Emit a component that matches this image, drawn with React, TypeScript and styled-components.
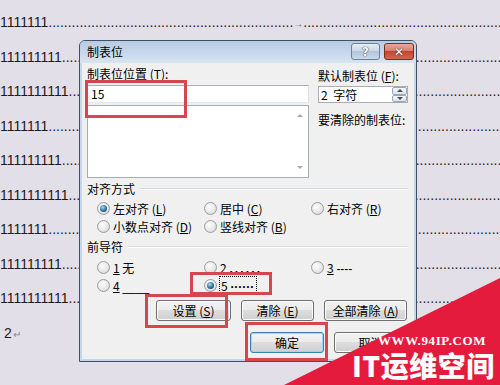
import React from "react";
import styled, { createGlobalStyle } from "styled-components";

const GlobalStyle = createGlobalStyle`
  html, body {
    margin: 0;
    padding: 0;
  }
  body {
    background: #e3dfe9;
    overflow: hidden;
  }
`;

const UI_FONT = `"Noto Sans CJK SC", "Liberation Sans", sans-serif`;

const Page = styled.div`
  position: relative;
  width: 500px;
  height: 385px;
  overflow: hidden;
  background: #e3dfe9;
`;

const Doc = styled.div`
  padding-top: 5px;
  font-family: "Liberation Sans", Arial, sans-serif;
  font-size: 14px;
  color: #1b1b1b;
`;

const DocLine = styled.div<{ $indent?: number }>`
  height: 34.5px;
  line-height: 34.5px;
  white-space: nowrap;
  overflow: hidden;
  padding-left: ${({ $indent }) => $indent ?? 0}px;
`;

const TabArrow = styled.span`
  font-size: 10px;
  color: #555;
`;

const Pilcrow = styled.span`
  font-size: 10px;
  color: #888;
  margin-left: 1px;
`;

/* ---------- dialog window ---------- */

const Window = styled.div`
  position: absolute;
  left: 79px;
  top: 40px;
  width: 338px;
  height: 322px;
  box-sizing: border-box;
  border: 1px solid #3f5066;
  border-radius: 6px 6px 0 0;
  background: #c6d7eb;
  display: flex;
  flex-direction: column;
  font-family: ${UI_FONT};
  font-size: 12px;
  color: #000;
`;

const TitleBar = styled.div`
  height: 22px;
  box-sizing: border-box;
  display: flex;
  align-items: flex-start;
  justify-content: space-between;
  padding: 2px 2px 0 7px;
  border-radius: 5px 5px 0 0;
  background: linear-gradient(#b7cbe3, #d7e4f2);
`;

const Title = styled.span`
  line-height: 16px;
  margin-top: 1px;
`;

const CaptionButtons = styled.div`
  display: flex;
  gap: 4px;
`;

const CaptionButton = styled.div<{ $close?: boolean }>`
  width: ${({ $close }) => ($close ? 30 : 29)}px;
  height: 17px;
  box-sizing: border-box;
  border-radius: 3px;
  display: flex;
  align-items: center;
  justify-content: center;
  font-family: "DejaVu Sans", sans-serif;
  font-weight: bold;
  font-size: 12px;
  color: #fff;
  text-shadow: 0 0 1px #333, 0 0 1px #333;
  border: 1px solid ${({ $close }) => ($close ? "#7a2c20" : "#6f8199")};
  background: ${({ $close }) =>
    $close
      ? "linear-gradient(#e9a89a, #d8806c 45%, #c4452e 50%, #d2674f)"
      : "linear-gradient(#e6edf5, #cbd8e7 45%, #b3c6dc 50%, #c9d9ea)"};
`;

const Client = styled.div`
  flex: 1;
  margin: 0 2px 2px;
  background: #f0f0f0;
  padding: 3px 6px 0 5px;
  display: flex;
  flex-direction: column;
`;

const TopSection = styled.div`
  display: flex;
  gap: 9px;
`;

const Column = styled.div<{ $width: number }>`
  width: ${({ $width }) => $width}px;
  display: flex;
  flex-direction: column;
`;

const FieldLabel = styled.div<{ $gap?: number }>`
  line-height: 16px;
  white-space: nowrap;
  margin-top: ${({ $gap }) => $gap ?? 0}px;
`;

const TextInput = styled.div`
  margin-top: 3px;
  height: 18px;
  box-sizing: border-box;
  border: 1px solid #abadb3;
  border-color: #abadb3 #dbdfe6 #e3e9ef #e2e3ea;
  background: #fff;
  padding-left: 3px;
  line-height: 16px;
`;

const ListBox = styled.div`
  margin-top: 2px;
  height: 73px;
  box-sizing: border-box;
  border: 1px solid #a8acb3;
  background: #fff;
  display: flex;
  justify-content: flex-end;
`;

const ScrollTrack = styled.div`
  width: 17px;
  display: flex;
  flex-direction: column;
  justify-content: space-between;
  align-items: center;
  padding: 8px 0 8px;
`;

const Arrow = styled.span<{ $down?: boolean }>`
  width: 0;
  height: 0;
  border-left: 3px solid transparent;
  border-right: 3px solid transparent;
  ${({ $down }) => ($down ? "border-top: 3px solid #a9a9a9;" : "border-bottom: 3px solid #a9a9a9;")}
`;

const SpinBox = styled.div`
  margin-top: 2px;
  height: 17px;
  box-sizing: border-box;
  border: 1px solid #abadb3;
  background: #fff;
  display: flex;
`;

const SpinText = styled.span`
  flex: 1;
  padding-left: 2px;
  line-height: 15px;
  word-spacing: 3px;
`;

const SpinButtons = styled.div`
  width: 15px;
  display: flex;
  flex-direction: column;
`;

const SpinHalf = styled.div`
  flex: 1;
  box-sizing: border-box;
  border: 1px solid #9ba7b8;
  border-radius: 2px;
  background: linear-gradient(#f4f7fb, #dde5ef);
  display: flex;
  align-items: center;
  justify-content: center;
`;

const SpinArrow = styled.span<{ $down?: boolean }>`
  width: 0;
  height: 0;
  border-left: 3px solid transparent;
  border-right: 3px solid transparent;
  ${({ $down }) => ($down ? "border-top: 3px solid #4a4a4a;" : "border-bottom: 3px solid #4a4a4a;")}
`;

const GroupHeader = styled.div<{ $gap: number }>`
  margin-top: ${({ $gap }) => $gap}px;
  display: flex;
  align-items: center;
  gap: 5px;
  line-height: 16px;
`;

const Rule = styled.div`
  flex: 1;
  height: 0;
  border-top: 1px solid #d5dadf;
  border-bottom: 1px solid #fff;
`;

const RadioGrid = styled.div<{ $gap: number }>`
  margin-top: ${({ $gap }) => $gap}px;
  padding-left: 10px;
  display: grid;
  grid-template-columns: repeat(3, 107px);
  grid-auto-rows: 18px;
`;

const RadioItem = styled.div`
  display: flex;
  align-items: center;
  gap: 3px;
  white-space: nowrap;
`;

const RadioCircle = styled.span`
  width: 13px;
  height: 13px;
  box-sizing: border-box;
  border-radius: 50%;
  border: 1px solid #9c9c9c;
  background: radial-gradient(circle at 40% 35%, #fdfdfd 0%, #e8e8e8 55%, #cdcdcd 100%);
  display: flex;
  align-items: center;
  justify-content: center;
`;

const RadioDot = styled.span`
  width: 7px;
  height: 7px;
  border-radius: 50%;
  background: radial-gradient(circle at 40% 35%, #a8dcf3 0%, #2f7098 55%, #173f5a 100%);
`;

const Acc = styled.span`
  text-decoration: underline;
`;

const Leader = styled.span<{ $spacing?: number; $bold?: boolean }>`
  font-family: "Liberation Sans", Arial, sans-serif;
  font-size: 12px;
  font-weight: ${({ $bold }) => ($bold ? "bold" : "normal")};
  color: #000;
  letter-spacing: ${({ $spacing }) => $spacing ?? 0}px;
`;

const FocusRect = styled.span`
  outline: 1px dotted #000;
  padding: 0 2px 0 1px;
`;

const ButtonRow = styled.div<{ $gap: number }>`
  margin-top: ${({ $gap }) => $gap}px;
  display: flex;
  justify-content: flex-end;
  gap: 10px;
  padding-right: 1px;
`;

const Button = styled.div<{ $width: number; $default?: boolean }>`
  width: ${({ $width }) => $width}px;
  height: 21px;
  box-sizing: border-box;
  border-radius: 3px;
  border: 1px solid ${({ $default }) => ($default ? "#3c7fb1" : "#707070")};
  box-shadow: inset 0 0 0 1px ${({ $default }) => ($default ? "#9fd5f2" : "#fbfbfb")};
  background: linear-gradient(#f2f2f2 0%, #ebebeb 50%, #dddddd 50%, #cfcfcf 100%);
  display: flex;
  align-items: center;
  justify-content: center;
  line-height: 16px;
  white-space: nowrap;
`;

/* ---------- annotations / watermark ---------- */

const Highlight = styled.div<{ $x: number; $y: number; $w: number; $h: number }>`
  position: absolute;
  left: ${({ $x }) => $x}px;
  top: ${({ $y }) => $y}px;
  width: ${({ $w }) => $w}px;
  height: ${({ $h }) => $h}px;
  box-sizing: border-box;
  border: 3px solid #d6464f;
`;

const WatermarkBand = styled.div`
  position: absolute;
  left: 280px;
  top: 275px;
  width: 220px;
  height: 110px;
  background: #e51b3d;
  clip-path: polygon(4px 110px, 220px 3px, 220px 110px);
`;

const WatermarkUrl = styled.div`
  position: absolute;
  left: 378px;
  top: 333px;
  font-family: "Liberation Serif", "Times New Roman", serif;
  font-weight: bold;
  font-size: 13px;
  line-height: 16px;
  color: #fff;
  letter-spacing: 0.6px;
`;

const WatermarkName = styled.div`
  position: absolute;
  left: 352px;
  top: 348px;
  font-family: "Noto Sans CJK SC", sans-serif;
  font-weight: 900;
  font-size: 28px;
  line-height: 34px;
  color: #fff;
  letter-spacing: 0.5px;
  white-space: nowrap;
`;

const dots = (n: number) => ".".repeat(n);

const docRows = [
  "111111111.",
  "1111111111",
  "1111111....",
  "111111111.",
  "1111111111",
  "1111111....",
  "111111111.",
  "1111111111",
];

const Radio: React.FC<{ checked?: boolean; children: React.ReactNode }> = ({ checked, children }) => (
  <RadioItem>
    <RadioCircle>{checked && <RadioDot />}</RadioCircle>
    <span>{children}</span>
  </RadioItem>
);

const TabDialog: React.FC = () => (
  <Window>
    <TitleBar>
      <Title>制表位</Title>
      <CaptionButtons>
        <CaptionButton>?</CaptionButton>
        <CaptionButton $close>✕</CaptionButton>
      </CaptionButtons>
    </TitleBar>
    <Client>
      <TopSection>
        <Column $width={222}>
          <FieldLabel>
            制表位位置 (<Acc>T</Acc>):
          </FieldLabel>
          <TextInput>15</TextInput>
          <ListBox>
            <ScrollTrack>
              <Arrow />
              <Arrow $down />
            </ScrollTrack>
          </ListBox>
        </Column>
        <Column $width={90}>
          <FieldLabel $gap={2}>
            默认制表位 (<Acc>F</Acc>):
          </FieldLabel>
          <SpinBox>
            <SpinText>2 字符</SpinText>
            <SpinButtons>
              <SpinHalf>
                <SpinArrow />
              </SpinHalf>
              <SpinHalf>
                <SpinArrow $down />
              </SpinHalf>
            </SpinButtons>
          </SpinBox>
          <FieldLabel $gap={9}>要清除的制表位:</FieldLabel>
        </Column>
      </TopSection>

      <GroupHeader $gap={3}>
        <span>对齐方式</span>
        <Rule />
      </GroupHeader>
      <RadioGrid $gap={2}>
        <Radio checked>
          左对齐 (<Acc>L</Acc>)
        </Radio>
        <Radio>
          居中 (<Acc>C</Acc>)
        </Radio>
        <Radio>
          右对齐 (<Acc>R</Acc>)
        </Radio>
        <Radio>
          小数点对齐 (<Acc>D</Acc>)
        </Radio>
        <Radio>
          竖线对齐 (<Acc>B</Acc>)
        </Radio>
      </RadioGrid>

      <GroupHeader $gap={4}>
        <span>前导符</span>
        <Rule />
      </GroupHeader>
      <RadioGrid $gap={3}>
        <Radio>
          <Acc>1</Acc> 无
        </Radio>
        <Radio>
          <Acc>2</Acc> <Leader $spacing={-0.6} $bold>. . . . . .</Leader>
        </Radio>
        <Radio>
          <Acc>3</Acc> <Leader>----</Leader>
        </Radio>
        <Radio>
          <Acc>4</Acc> <Leader>____</Leader>
        </Radio>
        <Radio checked>
          <FocusRect>
            <Acc>5</Acc> <Leader $bold>······</Leader>
          </FocusRect>
        </Radio>
      </RadioGrid>

      <ButtonRow $gap={6}>
        <Button $width={75}>
          设置 (<Acc>S</Acc>)
        </Button>
        <Button $width={73}>
          清除 (<Acc>E</Acc>)
        </Button>
        <Button $width={83}>
          全部清除 (<Acc>A</Acc>)
        </Button>
      </ButtonRow>
      <ButtonRow $gap={11}>
        <Button $width={74} $default>
          确定
        </Button>
        <Button $width={73}>取消</Button>
      </ButtonRow>
    </Client>
  </Window>
);

const App: React.FC = () => (
  <Page>
    <GlobalStyle />
    <Doc>
      <DocLine>
        1111111{dots(63)}
        <TabArrow>→</TabArrow>
        {dots(60)}
      </DocLine>
      {docRows.map((row, i) => (
        <DocLine key={i}>
          {row}
          {dots(120)}
        </DocLine>
      ))}
      <DocLine $indent={4}>
        2<Pilcrow>↵</Pilcrow>
      </DocLine>
    </Doc>

    <TabDialog />

    <Highlight $x={85} $y={80} $w={102} $h={38} />
    <Highlight $x={190} $y={272} $w={82} $h={23} />
    <Highlight $x={145} $y={294} $w={83} $h={34} />
    <Highlight $x={245} $y={322} $w={83} $h={39} />

    <WatermarkBand />
    <WatermarkUrl>WWW.94IP.COM</WatermarkUrl>
    <WatermarkName>IT运维空间</WatermarkName>
  </Page>
);

export default App;
